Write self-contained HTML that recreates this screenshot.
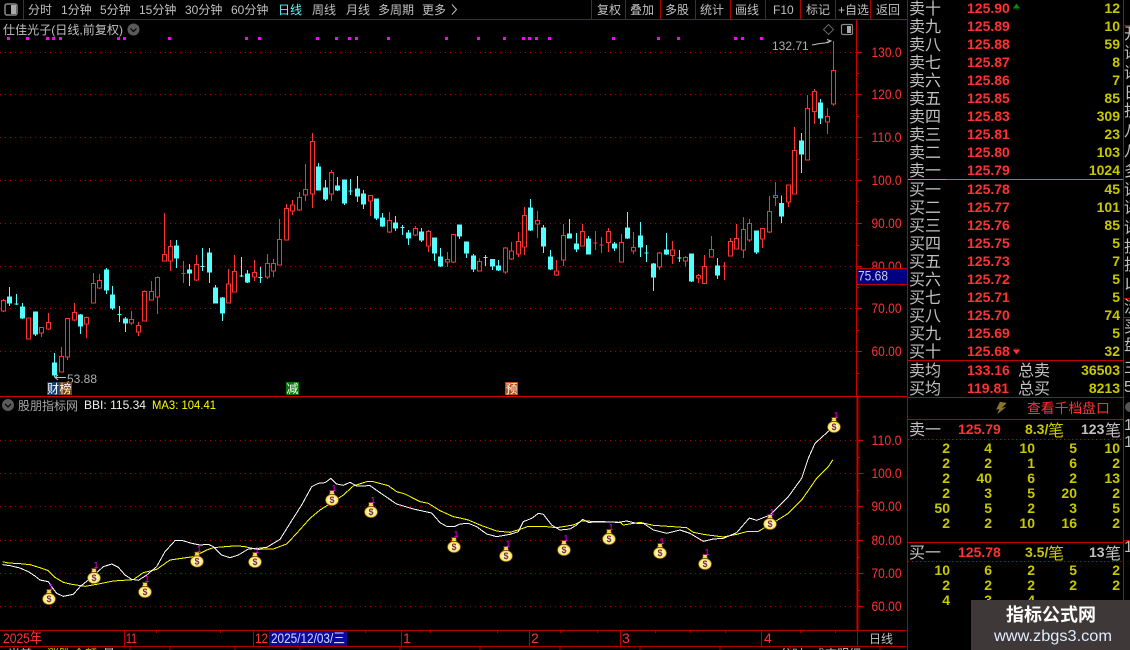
<!DOCTYPE html>
<html lang="zh">
<head>
<meta charset="utf-8">
<title>仕佳光子</title>
<style>
html,body{margin:0;padding:0;background:#000;width:1130px;height:650px;overflow:hidden}
svg{display:block}
text{font-family:"Liberation Sans","Noto Sans CJK SC",sans-serif;white-space:pre}
.tb{fill:#c0c0c0;font-size:12px}
.ax{fill:#ff3232;font-size:14px}
.lb{fill:#c0c0c0;font-size:16px}
.p{fill:#ff3232;font-size:14px;font-weight:bold}
.q{fill:#c8c800;font-size:14px;font-weight:bold;text-anchor:end}
.g{fill:#c0c0c0}
</style>
</head>
<body>
<svg width="1130" height="650" viewBox="0 0 1130 650" xmlns="http://www.w3.org/2000/svg">
<symbol id="bag" viewBox="0 0 14 17" width="14" height="17" overflow="visible">
<path d="M4.500 0.500H9.500L9 2.500 10 4.500H4L5 2.500Z" fill="#ffd848" stroke="#5a3810" stroke-width=".7"/>
<ellipse cx="7" cy="10" rx="6.900" ry="6" fill="#6a4414"/>
<ellipse cx="7" cy="10" rx="6.200" ry="5.300" fill="#ffe858"/>
<ellipse cx="7" cy="10" rx="4.400" ry="3.900" fill="#fff6c8"/>
<text x="7" y="13.200" font-size="9" font-weight="bold" text-anchor="middle" fill="#7a2a2a">$</text>
</symbol>

<!-- grid -->
<g stroke="#a00000" stroke-width="1" stroke-dasharray="1 4" shape-rendering="crispEdges">
<path d="M0 52.500H856M0 94.500H856M0 137.500H856M0 180.500H856M0 223.500H856M0 266.500H856M0 308.500H856M0 351.500H856"/>
<path d="M0 440.500H856M0 473.500H856M0 506.500H856M0 540.500H856M0 573.500H856M0 606.500H856"/>
</g>

<!-- frame -->
<g stroke="#b00000" fill="none" stroke-width="1" shape-rendering="crispEdges">
<path d="M0 19.500H907.500M23.500 0V19M591.500 0V19M625.500 0V19M660.500 0V19M695.500 0V19M730.500 0V19M765.500 0V19M800.500 0V19M835.500 0V19M870.500 0V19M907.500 0V650"/>
<path d="M856.500 20V396M0 396.500H907" stroke="#d00000"/>
<path d="M857.500 396V630" stroke-width="2" stroke="#d00000"/>
<path d="M0 630.500H907M0 646.500H907M124.500 630V646M253.500 630V646M401.500 630V646M529.500 630V646M620.500 630V646M761.500 630V646M857.500 630V646"/>
<path d="M856 52.500H862M856 73.500H859M856 94.500H862M856 116.500H859M856 137.500H862M856 159.500H859M856 180.500H862M856 201.500H859M856 223.500H862M856 245.500H859M856 266.500H862M856 287.500H859M856 308.500H862M856 330.500H859M856 351.500H862M856 373.500H859" stroke="#d00000"/>
<path d="M857 440.500H863M857 457.500H860M857 473.500H863M857 490.500H860M857 506.500H863M857 523.500H860M857 540.500H863M857 557.500H860M857 573.500H863M857 590.500H860M857 606.500H863" stroke="#d00000"/>
<path d="M30 646V650M95 646V650M130 646V650M170 646V650M235 646V650M300 646V650M400 646V650M480 646V650M560 646V650M640 646V650M720 646V650M790 646V650M880 646V650"/>
<path d="M156.500 630V633M220.500 630V633M285.500 630V633M365.500 630V633M430.500 630V633M497.500 630V633M560.500 630V633M597.500 630V633M655.500 630V633M690.500 630V633M725.500 630V633M800.500 630V633M835.500 630V633"/>
<path d="M1123.500 0V600M908 360.500H1123M908 397.500H1123M908 419.500H1123M908 542.500H1123M1124 25.500H1130M1124 298.500H1130M1124 317.500H1130M1124 540.500H1130" stroke="#c00000"/>
</g>
<path d="M908 179.500H946" stroke="#c89040" shape-rendering="crispEdges"/>
<path d="M946 179.500H1123" stroke="#5088c0" shape-rendering="crispEdges"/>
<path d="M908 439.500H1123M908 561.500H1123" stroke="#c00000" stroke-dasharray="1 3" shape-rendering="crispEdges"/>

<!-- candles left -->
<g transform="translate(0.170 200.170) scale(.33333)" stroke-width="3" shape-rendering="crispEdges">
<path stroke="#ff3232" fill="none" d="M10 297V301M10 332V335M4 301H16V332H4ZM79 354H91V416H79ZM124 398V411M118 382H130V398H118ZM145 339V367M145 386V390M139 367H151V386H139ZM184 441V469M178 469H190V515H178ZM202 470V480M196 355H208V470H196ZM223 309V337M223 359V363M217 337H229V359H217ZM259 349V352M259 371V414M253 352H265V371H253ZM280 219V250M274 250H286V308H274ZM298 222V241M298 263V267M292 241H304V263H292ZM394 333V358M394 369V375M388 358H400V369H388ZM415 366V376M415 395V408M409 376H421V395H409ZM433 271V274M427 274H439V362H427ZM454 243V274M448 274H460V299H448ZM472 229V232M472 290V342M466 232H478V290H466ZM493 39V163M487 163H499V182H487ZM511 120V139M511 182V213M505 139H517V182H505ZM550 183V249M544 220H556M589 165V193M589 240V243M583 193H595V240H583ZM685 207V252M679 252H691V308H679ZM703 165V214M697 214H709V275H697ZM763 180V217M763 231V243M757 217H769V231H757ZM802 162V190M802 231V237M796 190H808V231H796ZM820 177V190M820 213V231M814 190H826V213H814ZM838 57V118M832 118H844V195H832ZM859 12V25M853 25H865V119H853ZM877 0V15M877 32V45M871 15H883V32H871ZM898 -24V-8M898 29V32M892 -8H904V29H892ZM916 -108V-32M916 -16V3M910 -32H922V-16H910ZM937 -201V-176M937 -19V24M931 -176H943V-19H931ZM994 -90V-83M994 -19V3M988 -83H1000V-19H988ZM1111 -15V-14M1111 3V48M1105 -14H1117V3H1105ZM1168 36V61M1168 95V99M1162 61H1174V95H1162ZM1246 78V85M1246 105V108M1240 85H1252V105H1240ZM1285 90V94M1285 137V156M1279 94H1291V137H1279ZM1342 156V178M1342 186V201M1336 178H1348V186H1336ZM1360 186V189M1354 103H1366V186H1354Z"/>
<path stroke="#54ffff" fill="#54ffff" d="M28 261V318M22 291H34V309H22ZM49 282V315M43 311H55M67 309V357M61 321H73V354H61ZM106 334V407M100 336H112V402H100ZM163 459V530M157 489H169V525H157ZM241 342V402M235 345H247V378H235ZM319 204V282M313 210H325V270H313ZM337 258V330M331 285H343V324H331ZM358 318V366M352 343H364M376 351V396M370 357H382V369H370ZM529 120V204M523 138H535V174H523ZM568 192V258M562 210H574V219H562ZM607 144V213M601 199H613M628 144V249M622 159H634V216H622ZM646 255V309M640 264H652V309H640ZM667 291V363M661 294H673V339H661ZM724 171V231M718 227H730M742 210V249M736 222H748V246H736ZM781 201V249M775 232H787M955 -111V-30M949 -99H961V-30H949ZM976 -60V3M970 -36H982V-3H970ZM1012 -69V-27M1006 -42H1018V-30H1006ZM1033 -60V15M1027 -60H1039V9H1027ZM1051 -63V-15M1045 -28H1057M1072 -72V6M1066 -33H1078V-12H1066ZM1090 -30V27M1084 -18H1096V12H1084ZM1129 -3V60M1123 -3H1135V54H1123ZM1147 39V81M1141 54H1153V78H1141ZM1186 48V93M1180 69H1192V84H1180ZM1207 75V105M1201 82H1213M1225 90V135M1219 99H1231V114H1219ZM1264 84V126M1258 96H1270V120H1258ZM1303 114V183M1297 114H1309V159H1297ZM1321 144V201M1315 171H1327V198H1315ZM1378 75V117M1372 75H1384V108H1372Z"/>
</g>
<!-- candles right -->
<g transform="translate(460.170 200.170) scale(.33333)" stroke-width="3" shape-rendering="crispEdges">
<path stroke="#ff3232" fill="none" d="M58 175V184M52 184H64V213H52ZM136 141V144M136 216V222M130 144H142V216H130ZM154 126V153M154 177V180M148 153H160V177H148ZM175 96V124M175 161V171M169 124H181V161H169ZM193 21V46M193 140V165M187 46H199V140H187ZM232 33V61M232 71V114M226 61H238V71H226ZM289 180V213M289 225V228M283 213H295V225H283ZM310 72V106M310 179V198M304 106H316V179H304ZM367 72V94M361 94H373V137H361ZM406 93V150M400 128H412M424 111V159M418 134H430M445 84V94M445 127V156M439 94H451V127H439ZM484 102V127M478 127H490V185H478ZM520 96V142M520 152V162M514 142H526V152H514ZM598 156V159M598 201V210M592 159H604V201H592ZM637 123V150M637 166V192M631 150H643V166H631ZM676 168V172M676 183V199M670 172H682V183H670ZM715 222V226M715 233V249M709 226H721V233H709ZM733 165V199M727 199H739V250H727ZM754 108V148M748 148H760V170H748ZM793 186V240M787 197H799M811 114V124M805 124H817V167H805ZM829 72V115M823 115H835V146H823ZM850 51V88M850 149V174M844 88H856V149H844ZM868 57V70M868 120V126M862 70H874V120H862ZM907 116V144M901 85H913V116H901ZM928 -12V34M928 95V99M922 34H934V95H922ZM946 -54V-14M946 -8V18M940 -14H952V-8H940ZM985 6V21M979 -45H991V6H979ZM1003 -219V-149M997 -149H1009V-19H997ZM1042 -315V-275M1036 -275H1048V-121H1036ZM1063 -333V-326M1063 -266V-228M1057 -326H1069V-266H1057ZM1102 -276V-251M1102 -235V-198M1096 -251H1108V-235H1096ZM1120 -477V-389M1120 -289V-282M1114 -389H1126V-289H1114Z"/>
<path stroke="#54ffff" fill="#54ffff" d="M19 126V174M13 126H25V159H13ZM40 162V216M34 168H46V207H34ZM76 165V198M70 172H82M97 177V210M91 178H103V198H91ZM115 180V213M109 198H121V210H109ZM211 -3V93M205 24H217V90H205ZM250 75V159M244 84H256V138H244ZM271 150V210M265 171H277V207H265ZM328 57V114M322 102H334V114H322ZM349 99V156M343 132H355V147H343ZM385 108V162M379 117H391V162H379ZM463 126V153M457 132H469V144H457ZM502 36V117M496 84H508V114H496ZM541 66V171M535 108H547V141H535ZM559 135V186M553 158H565M580 189V273M574 192H586V231H574ZM619 99V165M613 150H625V162H613ZM658 150V186M652 174H664M694 162V246M688 162H700V243H688ZM772 174V237M766 198H778V225H766ZM889 93V162M883 93H895V156H883ZM964 -14V69M958 10H970V48H958ZM1024 -201V-81M1018 -177H1030V-139H1018ZM1081 -303V-228M1075 -291H1087V-246H1075Z"/>
</g>

<!-- magenta dots -->
<g transform="scale(.33333)" fill="#ff00ff" shape-rendering="crispEdges">
<path d="M21 111h9v9h-9zM78 111h9v9h-9zM138 111h9v9h-9zM156 111h9v9h-9zM177 111h9v9h-9zM351 111h9v9h-9zM369 111h9v9h-9zM504 111h9v9h-9zM735 111h9v9h-9zM774 111h9v9h-9zM948 111h9v9h-9zM1005 111h9v9h-9zM1044 111h9v9h-9zM1065 111h9v9h-9zM1161 111h9v9h-9zM1335 111h9v9h-9zM1431 111h9v9h-9zM1509 111h9v9h-9zM1566 111h9v9h-9zM1584 111h9v9h-9zM1605 111h9v9h-9zM1644 111h9v9h-9zM1836 111h9v9h-9zM1971 111h9v9h-9zM2031 111h9v9h-9zM2202 111h9v9h-9zM2223 111h9v9h-9zM2280 111h9v9h-9z"/>
</g>

<!-- MA lines -->
<g transform="translate(0 390) scale(.33333)" fill="none" stroke-width="3" shape-rendering="crispEdges">
<path stroke="#ffff00" d="M8 515L25 519 60 521 90 524 120 533 145 542 165 562 190 577 215 583 255 589 290 583 340 573 400 569 430 548 470 538 510 510 580 500 620 480 640 473 700 468 730 469 770 478 820 477 860 462 890 430 930 385 960 360 1000 335 1030 315 1060 288 1100 275 1120 275 1165 287 1190 305 1215 312 1260 335 1285 340 1320 362 1360 380 1380 384 1405 390 1440 405 1490 423 1530 427 1560 418 1585 409 1630 409 1670 413 1720 405 1745 393 1810 395 1860 397 1870 405 1920 397 1960 406 2020 410 2060 413 2080 427 2110 433 2170 441 2210 433 2240 425 2275 424 2330 392 2365 370 2405 330 2450 265 2485 230 2498 210"/>
<path stroke="#ffffff" d="M8 524L30 527 60 534 85 545 105 558 120 570 145 575 155 590 170 610 190 619 220 613 240 590 265 570 290 548 310 530 335 522 355 532 375 555 395 568 415 571 440 555 470 530 495 485 525 452 545 451 575 460 600 465 625 463 640 470 665 495 690 503 715 495 745 477 775 475 800 472 840 448 870 400 905 345 935 290 955 280 975 278 993 265 1010 282 1030 286 1050 277 1070 288 1110 287 1150 315 1190 342 1240 357 1295 369 1320 398 1340 409 1365 409 1380 402 1405 400 1430 410 1460 432 1490 440 1530 433 1555 425 1570 395 1595 385 1615 370 1630 373 1655 405 1680 420 1710 417 1730 405 1748 388 1765 397 1810 396 1855 397 1880 393 1910 400 1930 400 1960 420 2000 430 2040 420 2070 430 2110 454 2140 447 2170 445 2210 428 2248 384 2270 391 2310 375 2365 320 2405 265 2425 205 2445 160 2495 115"/>
</g>

<!-- bags -->
<g>
<use href="#bag" x="42" y="589"/><use href="#bag" x="87" y="568"/><use href="#bag" x="138" y="582"/><use href="#bag" x="190" y="551.500"/><use href="#bag" x="248" y="552"/><use href="#bag" x="325" y="490"/><use href="#bag" x="364" y="502"/><use href="#bag" x="447" y="537"/><use href="#bag" x="499" y="546"/><use href="#bag" x="557" y="540"/><use href="#bag" x="602" y="529"/><use href="#bag" x="653" y="543"/><use href="#bag" x="698" y="554"/><use href="#bag" x="763" y="514"/><use href="#bag" x="827" y="417"/>
</g>
<g fill="#ff00ff" font-size="8.500" text-anchor="middle">
<text x="51" y="590">1</text><text x="96" y="568">1</text><text x="147" y="582">1</text><text x="199" y="552">1</text><text x="257" y="553">1</text><text x="334" y="491">1</text><text x="373" y="503">1</text><text x="456" y="537">1</text><text x="508" y="546.500">1</text><text x="566" y="541">1</text><text x="611" y="530">1</text><text x="662" y="544">1</text><text x="707" y="555">1</text><text x="772" y="515">1</text><text x="836" y="418">1</text>
</g>

<!-- toolbar -->
<rect x="5" y="4" width="12" height="11" rx="2" fill="none" stroke="#888" stroke-width="1.500"/>
<rect x="11" y="5" width="5" height="9" fill="#aaa"/>
<g class="tb">
<text class="tb" x="28" y="14">分时</text><text class="tb" x="61" y="14">1分钟</text><text class="tb" x="100" y="14">5分钟</text><text class="tb" x="139" y="14">15分钟</text><text class="tb" x="185" y="14">30分钟</text><text class="tb" x="231" y="14">60分钟</text>
<text class="tb" x="278" y="14" style="fill:#54ffff">日线</text><text class="tb" x="312" y="14">周线</text><text class="tb" x="346" y="14">月线</text><text class="tb" x="378" y="14">多周期</text><text class="tb" x="422" y="14">更多</text>
<text class="tb" x="597" y="14">复权</text><text class="tb" x="630" y="14">叠加</text><text class="tb" x="665" y="14">多股</text><text class="tb" x="700" y="14">统计</text><text class="tb" x="735" y="14">画线</text><text class="tb" x="773" y="14">F10</text><text class="tb" x="806" y="14">标记</text><text class="tb" x="838" y="14">+自选</text><text class="tb" x="876" y="14">返回</text>
</g>
<path d="M452 4.500L456.500 9.500 452 14.500" fill="none" stroke="#c0c0c0"/>

<!-- main title -->
<text class="tb" x="3" y="34" textLength="120" lengthAdjust="spacingAndGlyphs">仕佳光子(日线,前复权)</text>
<circle cx="133.500" cy="29.500" r="6" fill="#5a5a5a"/>
<path d="M130.500 28.500L133.500 31.500 136.500 28.500" fill="none" stroke="#000" stroke-width="1.200"/>
<path d="M828.500 24.500L833.500 29.500 828.500 34.500 823.500 29.500Z" fill="none" stroke="#666"/>
<rect x="841.500" y="24.500" width="11" height="10" rx="1.500" fill="none" stroke="#888" stroke-width="1.200"/>
<rect x="847" y="26" width="4" height="7" fill="#aaa"/>
<text x="772" y="50" font-size="12" fill="#b0b0b0">132.71</text>
<path d="M812 45L820 43.500 825 43 831 41M827 39.500L831 41 827 43" fill="none" stroke="#c0c0c0"/>
<text x="67" y="383" font-size="12" fill="#b0b0b0">53.88</text>
<path d="M55 377.500H66M58 375L55 377.500 58 380" fill="none" stroke="#c0c0c0"/>

<!-- badges -->
<rect x="47" y="382" width="12" height="13" fill="#143c6e"/><rect x="59" y="382" width="13" height="13" fill="#7a4410"/>
<rect x="286" y="382" width="13" height="13" fill="#0a760a"/><rect x="505" y="382" width="13" height="13" fill="#b84c10"/>
<g font-size="12" fill="#fff" text-anchor="middle">
<text x="53" y="393">财</text><text x="65.500" y="393">榜</text><text x="292.500" y="393">减</text><text x="511.500" y="393">预</text>
</g>

<!-- axis labels -->
<g class="ax">
<text class="ax" x="871.500" y="57" textLength="30" lengthAdjust="spacingAndGlyphs">130.0</text><text class="ax" x="871.500" y="99" textLength="30" lengthAdjust="spacingAndGlyphs">120.0</text><text class="ax" x="871.500" y="142" textLength="30" lengthAdjust="spacingAndGlyphs">110.0</text><text class="ax" x="871.500" y="185" textLength="30" lengthAdjust="spacingAndGlyphs">100.0</text><text class="ax" x="871.500" y="228" textLength="30" lengthAdjust="spacingAndGlyphs">90.00</text><text class="ax" x="871.500" y="271" textLength="30" lengthAdjust="spacingAndGlyphs">80.00</text><text class="ax" x="871.500" y="313" textLength="30" lengthAdjust="spacingAndGlyphs">70.00</text><text class="ax" x="871.500" y="356" textLength="30" lengthAdjust="spacingAndGlyphs">60.00</text>
<text class="ax" x="871.500" y="445" textLength="30" lengthAdjust="spacingAndGlyphs">110.0</text><text class="ax" x="871.500" y="478" textLength="30" lengthAdjust="spacingAndGlyphs">100.0</text><text class="ax" x="871.500" y="511" textLength="30" lengthAdjust="spacingAndGlyphs">90.00</text><text class="ax" x="871.500" y="545" textLength="30" lengthAdjust="spacingAndGlyphs">80.00</text><text class="ax" x="871.500" y="578" textLength="30" lengthAdjust="spacingAndGlyphs">70.00</text><text class="ax" x="871.500" y="611" textLength="30" lengthAdjust="spacingAndGlyphs">60.00</text>
</g>
<rect x="857" y="269" width="50" height="15" fill="#000080"/>
<path d="M857 268.500H907M857 284.500H907" stroke="#c00000" shape-rendering="crispEdges"/>
<text x="858" y="280.500" font-size="14" fill="#c8c8e8" textLength="30" lengthAdjust="spacingAndGlyphs">75.68</text>

<!-- sub title -->
<circle cx="8" cy="405" r="6" fill="#5a5a5a"/>
<path d="M5 404L8 407 11 404" fill="none" stroke="#000" stroke-width="1.200"/>
<text class="tb" x="18" y="410" style="font-size:12px;fill:#a8a8a8">股朋指标网</text>
<text x="84" y="409" font-size="12" fill="#f0f0f0" textLength="62" lengthAdjust="spacingAndGlyphs">BBI: 115.34</text>
<text x="152" y="409" font-size="12" fill="#ffff00" textLength="64" lengthAdjust="spacingAndGlyphs">MA3: 104.41</text>

<!-- time axis -->
<g class="ax">
<text class="ax" x="3" y="643" textLength="39" lengthAdjust="spacingAndGlyphs">2025年</text><text class="ax" x="126" y="643" textLength="11" lengthAdjust="spacingAndGlyphs">11</text><text class="ax" x="255" y="643" textLength="13" lengthAdjust="spacingAndGlyphs">12</text><text class="ax" x="403" y="643">1</text><text class="ax" x="531" y="643">2</text><text class="ax" x="622" y="643">3</text><text class="ax" x="764" y="643">4</text>
</g>
<rect x="269" y="631" width="78" height="15" fill="#0a0a9c"/>
<text x="271" y="643" font-size="14" fill="#d8d8ff" textLength="74" lengthAdjust="spacingAndGlyphs">2025/12/03/三</text>
<text class="tb" x="869" y="643">日线</text>
<g font-size="12">
<text x="8" y="658" fill="#c0c0c0">当前</text><text x="47" y="658" fill="#c8c800">涨跌</text><text x="73" y="658" fill="#c8c800">金额</text><text x="103" y="658" fill="#c0c0c0">量</text><text x="780" y="658" fill="#c0c0c0">分时</text><text x="813" y="658" fill="#c0c0c0">成交明细</text>
</g>

<!-- order book -->
<g class="lb">
<text class="lb" x="909" y="14">卖十</text><text class="lb" x="909" y="32">卖九</text><text class="lb" x="909" y="50">卖八</text><text class="lb" x="909" y="68">卖七</text><text class="lb" x="909" y="86">卖六</text><text class="lb" x="909" y="104">卖五</text><text class="lb" x="909" y="122">卖四</text><text class="lb" x="909" y="140">卖三</text><text class="lb" x="909" y="158">卖二</text><text class="lb" x="909" y="176">卖一</text>
<text class="lb" x="909" y="195">买一</text><text class="lb" x="909" y="213">买二</text><text class="lb" x="909" y="231">买三</text><text class="lb" x="909" y="249">买四</text><text class="lb" x="909" y="267">买五</text><text class="lb" x="909" y="285">买六</text><text class="lb" x="909" y="303">买七</text><text class="lb" x="909" y="321">买八</text><text class="lb" x="909" y="339">买九</text><text class="lb" x="909" y="357">买十</text>
<text class="lb" x="909" y="376">卖均</text><text class="lb" x="909" y="394">买均</text><text class="lb" x="1018" y="376">总卖</text><text class="lb" x="1018" y="394">总买</text>
</g>
<g>
<text class="p" x="967" y="13">125.90</text><text class="p" x="967" y="31">125.89</text><text class="p" x="967" y="49">125.88</text><text class="p" x="967" y="67">125.87</text><text class="p" x="967" y="85">125.86</text><text class="p" x="967" y="103">125.85</text><text class="p" x="967" y="121">125.83</text><text class="p" x="967" y="139">125.81</text><text class="p" x="967" y="157">125.80</text><text class="p" x="967" y="175">125.79</text>
<text class="p" x="967" y="194">125.78</text><text class="p" x="967" y="212">125.77</text><text class="p" x="967" y="230">125.76</text><text class="p" x="967" y="248">125.75</text><text class="p" x="967" y="266">125.73</text><text class="p" x="967" y="284">125.72</text><text class="p" x="967" y="302">125.71</text><text class="p" x="967" y="320">125.70</text><text class="p" x="967" y="338">125.69</text><text class="p" x="967" y="356">125.68</text>
<text class="p" x="967" y="375">133.16</text><text class="p" x="967" y="393">119.81</text>
</g>
<g>
<text class="q" x="1120" y="13">12</text><text class="q" x="1120" y="31">10</text><text class="q" x="1120" y="49">59</text><text class="q" x="1120" y="67">8</text><text class="q" x="1120" y="85">7</text><text class="q" x="1120" y="103">85</text><text class="q" x="1120" y="121">309</text><text class="q" x="1120" y="139">23</text><text class="q" x="1120" y="157">103</text><text class="q" x="1120" y="175">1024</text>
<text class="q" x="1120" y="194">45</text><text class="q" x="1120" y="212">101</text><text class="q" x="1120" y="230">85</text><text class="q" x="1120" y="248">5</text><text class="q" x="1120" y="266">7</text><text class="q" x="1120" y="284">5</text><text class="q" x="1120" y="302">5</text><text class="q" x="1120" y="320">74</text><text class="q" x="1120" y="338">5</text><text class="q" x="1120" y="356">32</text>
<text class="q" x="1120" y="375">36503</text><text class="q" x="1120" y="393">8213</text>
</g>
<path d="M1016.500 4L1019.500 8H1013.500ZM1013.500 9H1019.500" fill="#0a8a0a" stroke="#0a8a0a" stroke-width=".6"/>
<path d="M1016.500 354L1019.500 350H1013.500ZM1013.500 349H1019.500" fill="#ff3232" stroke="#ff3232" stroke-width=".6"/>

<!-- level 1000 -->
<path d="M1000 401.700L1006.700 403 1002 407.700 1006 407 997.300 414.300 999.300 409 996 409.700Z" fill="#8a7428"/>
<text x="1027" y="413" font-size="13.800" fill="#ff3232">查看千档盘口</text>

<text class="lb" x="909" y="435">卖一</text>
<text class="p" x="958" y="434">125.79</text>
<text x="1025" y="434" font-size="14" font-weight="bold" fill="#c8c800">8.3/</text><text x="1048" y="436" font-size="16" fill="#c8c800">笔</text>
<text x="1081" y="434" font-size="14" font-weight="bold" fill="#c0c0c0">123</text><text x="1105" y="436" font-size="16" fill="#c0c0c0">笔</text>
<text class="lb" x="909" y="558">买一</text>
<text class="p" x="958" y="557">125.78</text>
<text x="1025" y="557" font-size="14" font-weight="bold" fill="#c8c800">3.5/</text><text x="1048" y="559" font-size="16" fill="#c8c800">笔</text>
<text x="1089" y="557" font-size="14" font-weight="bold" fill="#c0c0c0">13</text><text x="1105" y="559" font-size="16" fill="#c0c0c0">笔</text>
<g>
<text class="q" x="950" y="453">2</text><text class="q" x="992" y="453">4</text><text class="q" x="1035" y="453">10</text><text class="q" x="1077" y="453">5</text><text class="q" x="1120" y="453">10</text>
<text class="q" x="950" y="468">2</text><text class="q" x="992" y="468">2</text><text class="q" x="1035" y="468">1</text><text class="q" x="1077" y="468">6</text><text class="q" x="1120" y="468">2</text>
<text class="q" x="950" y="483">2</text><text class="q" x="992" y="483">40</text><text class="q" x="1035" y="483">6</text><text class="q" x="1077" y="483">2</text><text class="q" x="1120" y="483">13</text>
<text class="q" x="950" y="498">2</text><text class="q" x="992" y="498">3</text><text class="q" x="1035" y="498">5</text><text class="q" x="1077" y="498">20</text><text class="q" x="1120" y="498">2</text>
<text class="q" x="950" y="513">50</text><text class="q" x="992" y="513">5</text><text class="q" x="1035" y="513">2</text><text class="q" x="1077" y="513">3</text><text class="q" x="1120" y="513">5</text>
<text class="q" x="950" y="528">2</text><text class="q" x="992" y="528">2</text><text class="q" x="1035" y="528">10</text><text class="q" x="1077" y="528">16</text><text class="q" x="1120" y="528">2</text>
<text class="q" x="950" y="575">10</text><text class="q" x="992" y="575">6</text><text class="q" x="1035" y="575">2</text><text class="q" x="1077" y="575">5</text><text class="q" x="1120" y="575">2</text>
<text class="q" x="950" y="590">2</text><text class="q" x="992" y="590">2</text><text class="q" x="1035" y="590">2</text><text class="q" x="1077" y="590">2</text><text class="q" x="1120" y="590">2</text>
<text class="q" x="950" y="605">4</text><text class="q" x="992" y="605">3</text><text class="q" x="1035" y="605">4</text>
</g>

<!-- right clipped column -->
<g class="lb" style="font-size:16px">
<text class="lb" x="1124" y="39">开</text><text class="lb" x="1124" y="58">评</text><text class="lb" x="1124" y="78">评</text><text class="lb" x="1124" y="98">日</text><text class="lb" x="1124" y="116">投</text><text class="lb" x="1124" y="136">八</text><text class="lb" x="1124" y="156">八</text><text class="lb" x="1124" y="176">多</text><text class="lb" x="1124" y="195">评</text><text class="lb" x="1124" y="213">评</text><text class="lb" x="1124" y="233">评</text><text class="lb" x="1124" y="252">投</text><text class="lb" x="1124" y="270">投</text><text class="lb" x="1124" y="290">以</text><text class="lb" x="1124" y="312">流</text><text class="lb" x="1124" y="332">买</text><text class="lb" x="1124" y="350">盘</text><text class="lb" x="1124" y="372">主</text><text class="lb" x="1124" y="392">5</text>
<text class="lb" x="1124" y="430">1</text><text class="lb" x="1124" y="447">1</text><text class="lb" x="1124" y="552">1</text>
</g>
<circle cx="1130" cy="407" r="5" fill="#555"/>

<!-- watermark -->
<rect x="971" y="600" width="159" height="50" fill="#3f3838"/>
<text x="1051" y="621" font-size="18" font-weight="bold" fill="#ffffff" text-anchor="middle">指标公式网</text>
<text x="1053" y="641" font-size="16" fill="#e0ecff" text-anchor="middle" textLength="118" lengthAdjust="spacingAndGlyphs">www.zbgs3.com</text>
</svg>
</body>
</html>
